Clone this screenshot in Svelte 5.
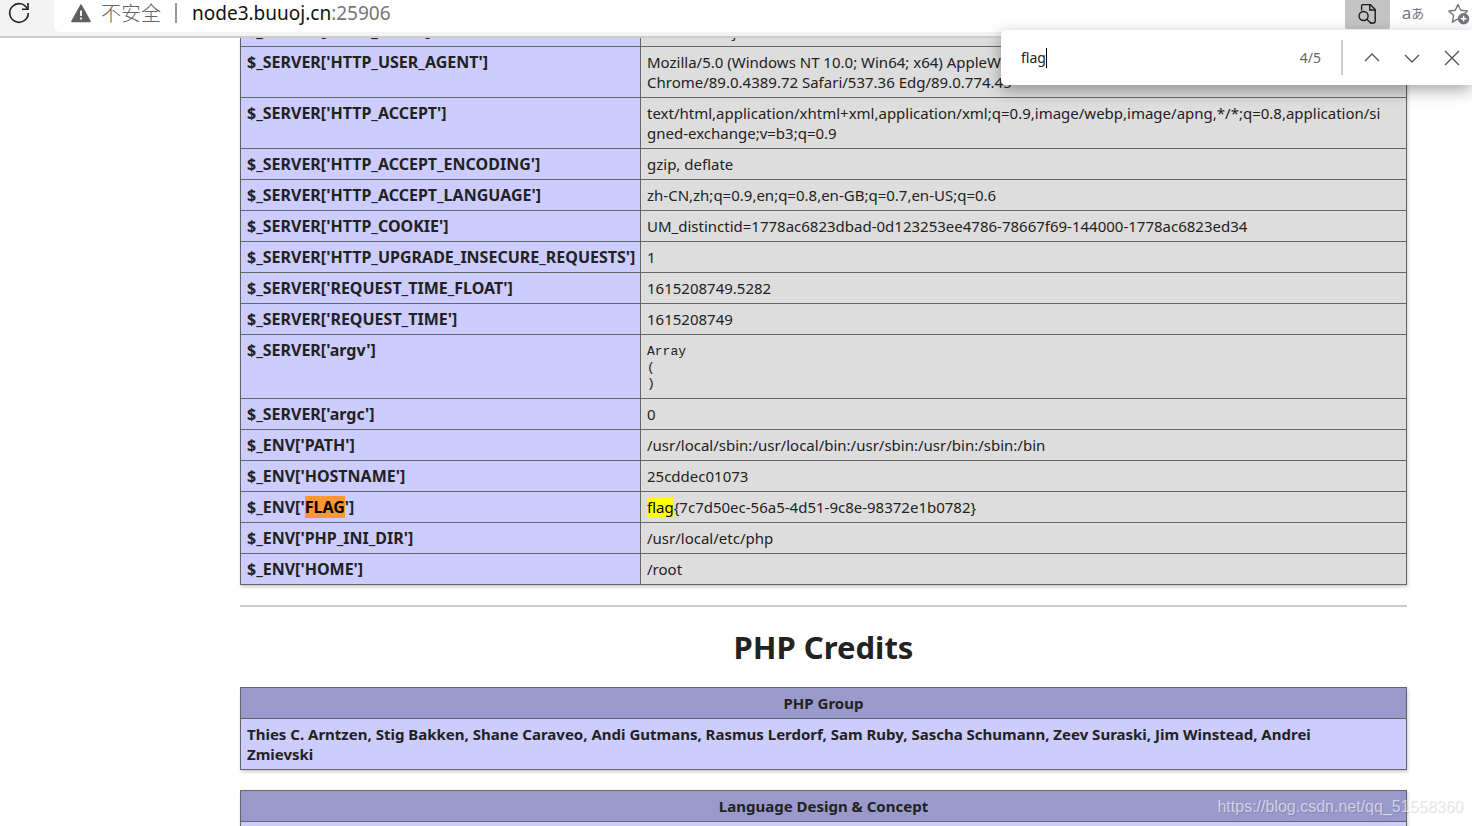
<script lang="ts">
	import { onMount } from 'svelte';

	type Row = { key: string; value: string; pre?: boolean };

	const rows: Row[] = [
		{ key: "$_SERVER['HTTP_HOST']", value: 'node3.buuoj.cn:25906' },
		{
			key: "$_SERVER['HTTP_USER_AGENT']",
			value:
				'Mozilla/5.0 (Windows NT 10.0; Win64; x64) AppleWebKit/537.36 (KHTML, like Gecko)\nChrome/89.0.4389.72 Safari/537.36 Edg/89.0.774.45'
		},
		{
			key: "$_SERVER['HTTP_ACCEPT']",
			value:
				'text/html,application/xhtml+xml,application/xml;q=0.9,image/webp,image/apng,*/*;q=0.8,application/si\ngned-exchange;v=b3;q=0.9'
		},
		{ key: "$_SERVER['HTTP_ACCEPT_ENCODING']", value: 'gzip, deflate' },
		{
			key: "$_SERVER['HTTP_ACCEPT_LANGUAGE']",
			value: 'zh-CN,zh;q=0.9,en;q=0.8,en-GB;q=0.7,en-US;q=0.6'
		},
		{
			key: "$_SERVER['HTTP_COOKIE']",
			value: 'UM_distinctid=1778ac6823dbad-0d123253ee4786-78667f69-144000-1778ac6823ed34'
		},
		{ key: "$_SERVER['HTTP_UPGRADE_INSECURE_REQUESTS']", value: '1' },
		{ key: "$_SERVER['REQUEST_TIME_FLOAT']", value: '1615208749.5282' },
		{ key: "$_SERVER['REQUEST_TIME']", value: '1615208749' },
		{ key: "$_SERVER['argv']", value: 'Array\n(\n)', pre: true },
		{ key: "$_SERVER['argc']", value: '0' },
		{ key: "$_ENV['PATH']", value: '/usr/local/sbin:/usr/local/bin:/usr/sbin:/usr/bin:/sbin:/bin' },
		{ key: "$_ENV['HOSTNAME']", value: '25cddec01073' },
		{ key: "$_ENV['FLAG']", value: 'flag{7c7d50ec-56a5-4d51-9c8e-98372e1b0782}' },
		{ key: "$_ENV['PHP_INI_DIR']", value: '/usr/local/etc/php' },
		{ key: "$_ENV['HOME']", value: '/root' }
	];

	let query = $state('flag');
	let page: HTMLElement;

	// split on the search term, keeping the matches
	function pieces(text: string): string[] {
		if (!query) return [text];
		const escaped = query.replace(/[.*+?^${}()|[\]\\]/g, '\\$&');
		return text.split(new RegExp(`(${escaped})`, 'i')).filter((p) => p !== '');
	}

	function isMatch(piece: string): boolean {
		return piece.toLowerCase() === query.toLowerCase();
	}

	onMount(() => {
		page.scrollTop = 23;
	});
</script>

<div class="window">
	<header>
		<button type="button" class="reload" aria-label="Reload">
			<svg width="24" height="24" viewBox="0 0 24 24" fill="none" stroke="#222" stroke-width="1.6">
				<path d="M20.5 8.2A9.3 9.3 0 1 0 21.3 12" />
				<path d="M21 2v6.2h-6" />
			</svg>
		</button>
		<div class="address">
			<svg class="warn" width="20" height="19" viewBox="0 0 20 19">
				<path d="M10 1.2 19 17.4H1Z" fill="#5f5f5f" stroke="#5f5f5f" stroke-width="1.6" stroke-linejoin="round" />
				<path d="M10 6.5v5.6M10 13.6v2" stroke="#fff" stroke-width="1.8" />
			</svg>
			<span class="insecure">不安全</span>
			<span class="bar"></span>
			<span class="url">node3.buuoj.cn<span class="port">:25906</span></span>
			<div class="tools">
				<button type="button" class="find-toggle" aria-label="Find on page">
					<svg width="20" height="22" viewBox="0 0 20 22" fill="none" stroke="#1b1b1b" stroke-width="1.4">
						<path d="M3.6 6.4V2q0-1.4 1.4-1.4h7.2l5 5v12q0 1.4-1.4 1.4h-3.4" />
						<path d="M11.8.6v5.4h5.4" />
						<circle cx="5.6" cy="12" r="4.5" />
						<path d="m8.8 15.2 4.4 4.4" />
					</svg>
				</button>
				<button type="button" class="translate" aria-label="Translate">a<small>あ</small></button>
				<button type="button" class="favourite" aria-label="Add to favourites">
					<svg width="23" height="22" viewBox="0 0 23 22" fill="none">
						<path d="m10 1.4 2.7 5.9 6.8.7-5 4.6M10 15.8l-5.7 3.3 1.3-6.5L.9 8l6.4-.7L10 1.4" stroke="#77757a" stroke-width="1.4" stroke-linejoin="round" />
						<circle cx="15.6" cy="15.7" r="5.7" fill="#77757a" />
						<path d="M15.6 12.8v5.8M12.7 15.7h5.8" stroke="#fff" stroke-width="1.4" />
					</svg>
				</button>
			</div>
		</div>
	</header>

	<form class="find" onsubmit={(e) => e.preventDefault()}>
		<div class="field">
			<input type="text" aria-label="Find on page" bind:value={query} />
			<span class="caret"></span>
		</div>
		<span class="count">4/5</span>
		<span class="split"></span>
		<button type="button" aria-label="Previous result">
			<svg width="16" height="16" viewBox="0 0 16 16"><path d="m1 11 7-7 7 7" /></svg>
		</button>
		<button type="button" aria-label="Next result">
			<svg width="16" height="16" viewBox="0 0 16 16"><path d="m1 5 7 7 7-7" /></svg>
		</button>
		<button type="button" aria-label="Close">
			<svg width="16" height="16" viewBox="0 0 16 16"><path d="m1 1 14 14M15 1 1 15" /></svg>
		</button>
	</form>

	<main bind:this={page}>
		<table class="vars">
			<tbody>
				{#each rows as row}
					<tr>
						<th scope="row">
							{#each pieces(row.key) as piece}{#if isMatch(piece)}<mark class="active">{piece}</mark>{:else}{piece}{/if}{/each}
						</th>
						<td>
							{#if row.pre}
								<pre>{row.value}</pre>
							{:else}
								<div class="value">{#each pieces(row.value) as piece}{#if isMatch(piece)}<mark>{piece}</mark>{:else}{piece}{/if}{/each}</div>
							{/if}
						</td>
					</tr>
				{/each}
			</tbody>
		</table>

		<hr />
		<h1>PHP Credits</h1>

		<table>
			<thead>
				<tr><th>PHP Group</th></tr>
			</thead>
			<tbody>
				<tr>
					<th scope="row">
						Thies C. Arntzen, Stig Bakken, Shane Caraveo, Andi Gutmans, Rasmus Lerdorf, Sam Ruby, Sascha
						Schumann, Zeev Suraski, Jim Winstead, Andrei<br />Zmievski
					</th>
				</tr>
			</tbody>
		</table>

		<table>
			<thead>
				<tr><th>Language Design &amp; Concept</th></tr>
			</thead>
			<tbody>
				<tr><th scope="row">Andi Gutmans, Rasmus Lerdorf, Zeev Suraski, Marcus Boerger</th></tr>
			</tbody>
		</table>
	</main>

	<span class="watermark">https://blog.csdn.net/qq_51558360</span>
</div>

<style>
	:global(body) {
		margin: 0;
		background: #fff;
	}

	.window {
		position: relative;
		display: flex;
		flex-direction: column;
		height: 100vh;
		overflow: hidden;
		font-family: 'Noto Sans', 'Noto Sans CJK SC', sans-serif;
		font-size: 15px;
		line-height: 20px;
		color: #222;
	}

	button {
		display: flex;
		align-items: center;
		justify-content: center;
		padding: 0;
		border: 0;
		background: none;
		font: inherit;
		cursor: pointer;
	}

	header {
		display: flex;
		flex: none;
		height: 36px;
		border-bottom: 2px solid #ccc;
		background: #f3f3f3;
	}

	.reload {
		width: 38px;
		height: 25px;
		margin-right: 16px;
	}

	.address {
		display: flex;
		flex: 1;
		align-items: center;
		height: 32px;
		padding-left: 17px;
		border-bottom-left-radius: 6px;
		background: #fff;
		font-size: 19px;
	}

	.warn,
	.insecure,
	.bar,
	.url {
		margin-bottom: 6px;
	}

	.insecure {
		margin-left: 10px;
		color: #666;
		font-family: 'Noto Sans CJK SC', sans-serif;
		font-size: 20px;
		font-weight: 300;
	}

	.bar {
		width: 2px;
		height: 20px;
		margin: 0 15px 6px 14px;
		background: #999;
	}

	.url {
		color: #111;
	}

	.port {
		color: #767676;
	}

	.tools {
		display: flex;
		align-items: flex-start;
		height: 32px;
		margin-left: auto;
	}

	.find-toggle {
		width: 45px;
		height: 29px;
		border-radius: 0 0 2px 2px;
		background: #c4c4c4;
	}

	.translate {
		width: 46px;
		height: 25px;
		color: #77757a;
		font-family: 'Noto Sans', 'Noto Sans CJK JP', sans-serif;
		font-size: 17px;
	}

	.translate small {
		font-size: 13px;
	}

	.favourite {
		width: 36px;
		height: 28px;
		padding-left: 10px;
	}

	.find {
		position: absolute;
		z-index: 1;
		top: 30px;
		right: 0;
		display: flex;
		align-items: center;
		box-sizing: border-box;
		width: 32%;
		height: 55px;
		padding-left: 20px;
		border-radius: 5px 0 0 5px;
		background: #fff;
		box-shadow: 0 5px 16px rgba(0, 0, 0, 0.35);
	}

	.field {
		display: flex;
		flex: 1;
		align-items: center;
	}

	.find input {
		field-sizing: content;
		padding: 0;
		border: 0;
		outline: 0;
		background: none;
		color: #222;
		font: inherit;
		font-size: 14px;
	}

	.caret {
		width: 1px;
		height: 20px;
		background: #000;
	}

	.count {
		color: #666;
		font-size: 14px;
	}

	.split {
		width: 2px;
		height: 35px;
		margin: 0 9px 0 20px;
		background: #ccc;
	}

	.find button {
		width: 40px;
		height: 40px;
	}

	.find svg {
		fill: none;
		stroke: #555;
		stroke-width: 1.4;
	}

	main {
		flex: 1;
		min-height: 0;
		padding: 0 65px 0 240px;
		overflow: hidden;
	}

	table {
		width: 100%;
		margin-bottom: 20px;
		border-collapse: collapse;
		box-shadow: 1px 2px 3px #ccc;
	}

	.vars {
		table-layout: fixed;
	}

	th,
	td {
		padding: 5px 6px;
		border: 1px solid #666;
		vertical-align: top;
		text-align: left;
	}

	th {
		background: #ccf;
		font-weight: 700;
	}

	td {
		background: #ddd;
	}

	.vars th {
		width: 387px;
		font-size: 16px;
		white-space: nowrap;
	}

	thead th {
		background: #99c;
		text-align: center;
	}

	.value {
		white-space: pre;
	}

	pre {
		margin: 4px 0 1px;
		font-family: 'Liberation Mono', monospace;
		font-size: 13px;
		line-height: 16px;
	}

	mark {
		background: #ff0;
		color: #000;
	}

	mark.active {
		background: #ff9632;
	}

	hr {
		height: 2px;
		margin: 0 0 20px;
		border: 0;
		background: #ccc;
	}

	h1 {
		margin: 0 0 20px;
		font-size: 31px;
		line-height: 40px;
		text-align: center;
	}

	.watermark {
		position: absolute;
		right: 9px;
		bottom: 9px;
		color: rgba(255, 255, 255, 0.6);
		font-family: 'Liberation Sans', Arial, sans-serif;
		font-size: 16px;
		text-shadow: 1px 1px 1px rgba(0, 0, 0, 0.15);
	}
</style>
